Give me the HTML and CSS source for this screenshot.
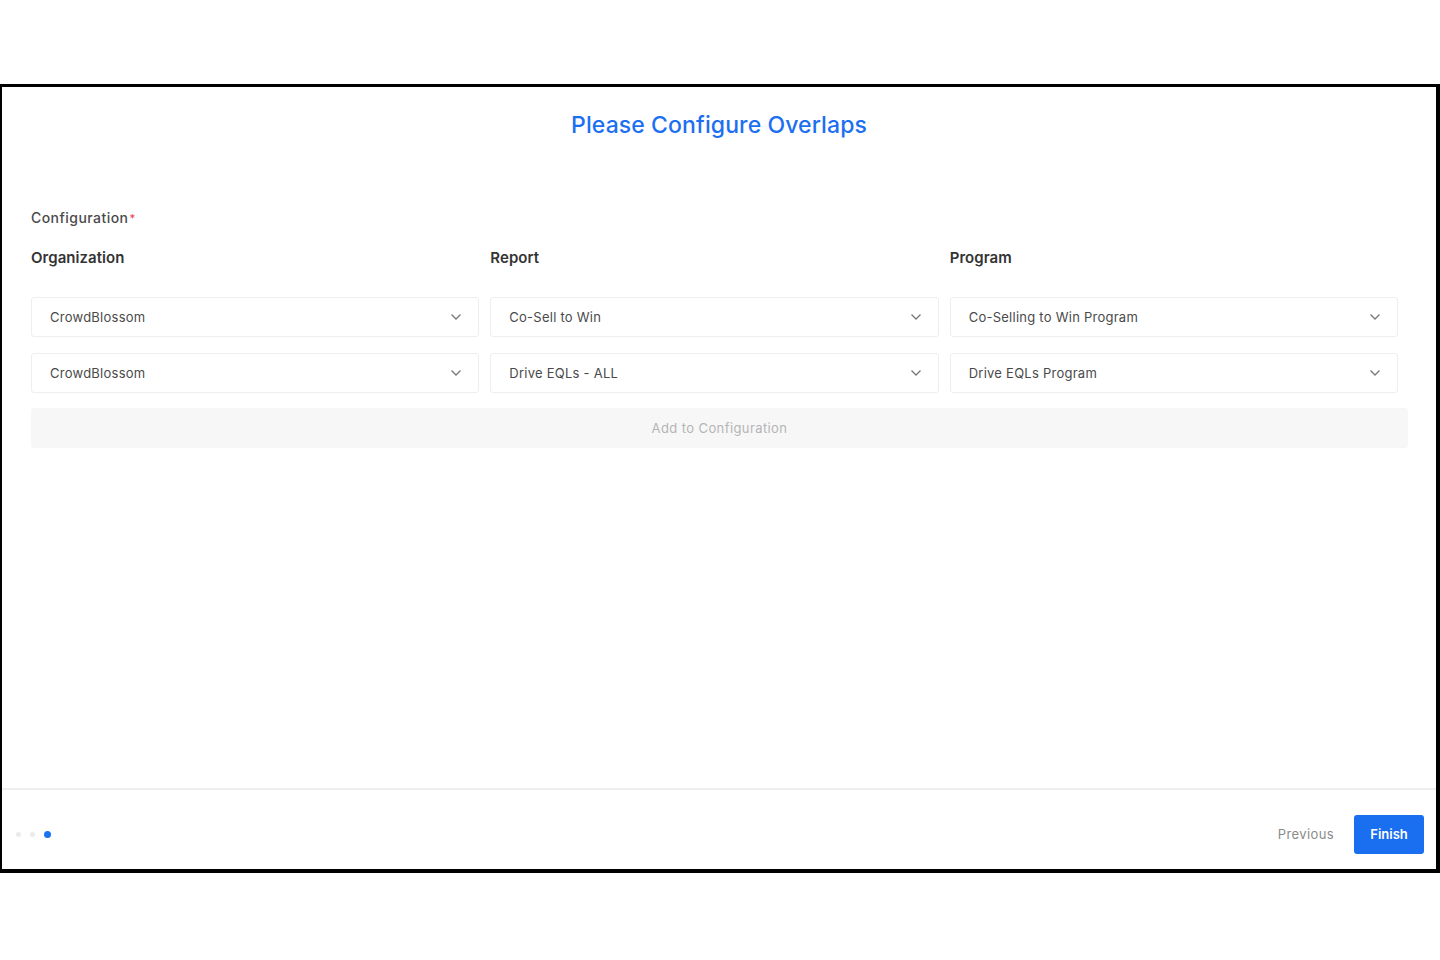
FILE: index.html
```html
<!DOCTYPE html>
<html>
<head>
<meta charset="utf-8">
<link rel="stylesheet" href="styles.css">
</head>
<body>
<div class="page">
  <div class="frame">
    <header class="head">
      <h1 class="title">Please Configure Overlaps</h1>
    </header>
    <main class="content">
      <div class="field-label">Configuration<span class="req">*</span></div>
      <div class="grid">
        <div class="col-label">Organization</div>
        <div class="col-label">Report</div>
        <div class="col-label">Program</div>

        <div class="select"><span>CrowdBlossom</span><svg class="chev" viewBox="0 0 12 8"><polyline points="1.5,1.5 6,6 10.5,1.5"/></svg></div>
        <div class="select"><span>Co-Sell to Win</span><svg class="chev" viewBox="0 0 12 8"><polyline points="1.5,1.5 6,6 10.5,1.5"/></svg></div>
        <div class="select"><span>Co-Selling to Win Program</span><svg class="chev" viewBox="0 0 12 8"><polyline points="1.5,1.5 6,6 10.5,1.5"/></svg></div>

        <div class="select"><span>CrowdBlossom</span><svg class="chev" viewBox="0 0 12 8"><polyline points="1.5,1.5 6,6 10.5,1.5"/></svg></div>
        <div class="select"><span>Drive EQLs - ALL</span><svg class="chev" viewBox="0 0 12 8"><polyline points="1.5,1.5 6,6 10.5,1.5"/></svg></div>
        <div class="select"><span>Drive EQLs Program</span><svg class="chev" viewBox="0 0 12 8"><polyline points="1.5,1.5 6,6 10.5,1.5"/></svg></div>
      </div>
      <button class="add-btn">Add to Configuration</button>
    </main>
    <footer class="foot">
      <div class="dots">
        <span class="dot"></span>
        <span class="dot"></span>
        <span class="dot active"></span>
      </div>
      <div class="actions">
        <button class="prev">Previous</button>
        <button class="finish">Finish</button>
      </div>
    </footer>
  </div>
</div>
</body>
</html>
```

FILE: styles.css
```css
* { box-sizing: border-box; }
html, body { margin: 0; padding: 0; background: #fff; }
body {
  font-family: Inter, "Noto Sans", "Liberation Sans", sans-serif;
  color: #333;
  width: 1440px;
  height: 960px;
  overflow: hidden;
}
.page {
  padding-top: 84px;
}
.frame {
  height: 789px;
  border-style: solid;
  border-color: #000;
  border-width: 3px 4px 4px 2px;
  display: flex;
  flex-direction: column;
  background: #fff;
}
.head {
  padding-top: 24px;
  text-align: center;
}
.title {
  margin: 0;
  font-size: 23px;
  line-height: 28px;
  font-weight: 500;
  color: #1d6ff2;
  letter-spacing: 0.1px;
}
.content {
  flex: 1;
  padding: 69px 28px 0 29px;
}
.field-label {
  font-size: 14px;
  line-height: 20px;
  color: #4a4a4a;
  font-weight: 500;
  letter-spacing: 0.45px;
}
.req { color: #e5484d; font-size: 11px; vertical-align: top; margin-left: 1px; }
.grid {
  margin-top: 20px;
  display: grid;
  grid-template-columns: repeat(3, 1fr);
  column-gap: 11px;
  row-gap: 16px;
  padding-right: 10px;
}
.col-label {
  font-size: 15px;
  line-height: 20px;
  font-weight: 600;
  color: #333;
  margin-bottom: 13px;
  letter-spacing: 0.05px;
}
.select {
  height: 40px;
  border: 1px solid #eeeeee;
  border-radius: 3px;
  display: flex;
  align-items: center;
  justify-content: space-between;
  padding: 0 16px 0 18px;
  font-size: 13px;
  color: #4a4a4a;
  letter-spacing: 0.25px;
}
.chev {
  width: 12px;
  height: 8px;
  fill: none;
  stroke: #777;
  stroke-width: 1.3;
}
.add-btn {
  display: block;
  width: 100%;
  margin-top: 15px;
  height: 40px;
  border: none;
  border-radius: 3px;
  background: #f7f7f7;
  color: #b5b5b5;
  font-family: inherit;
  font-size: 13px;
  letter-spacing: 0.4px;
}
.foot {
  border-top: 2px solid #efefef;
  height: 81px;
  padding: 24px 12px 15px 14px;
  display: flex;
  align-items: center;
  justify-content: space-between;
}
.dots {
  display: flex;
  align-items: center;
  gap: 9px;
}
.dot {
  width: 5px;
  height: 5px;
  border-radius: 50%;
  background: #ebebeb;
}
.dot.active {
  width: 7px;
  height: 7px;
  background: #1a73f0;
}
.actions {
  display: flex;
  align-items: center;
  gap: 20px;
}
.prev {
  border: none;
  background: none;
  color: #8a8a8a;
  font-family: inherit;
  font-size: 13px;
  letter-spacing: 0.4px;
  padding: 0;
}
.finish {
  width: 70px;
  height: 39px;
  border: none;
  border-radius: 3px;
  background: #1a6ef0;
  color: #fff;
  font-family: inherit;
  font-size: 13px;
  font-weight: 600;
}
```
